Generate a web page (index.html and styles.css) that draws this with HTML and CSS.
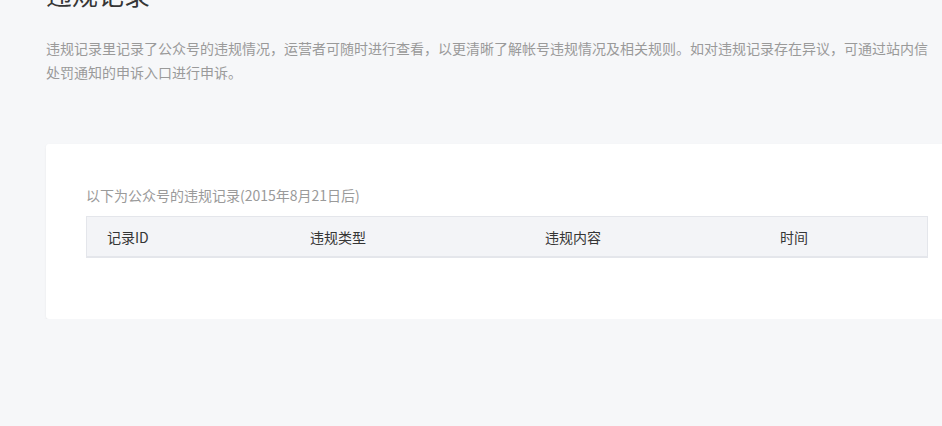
FILE: index.html
```html
<!DOCTYPE html>
<html lang="zh-CN">
<head>
    <meta charset="UTF-8">
    <title>违规记录</title>
    <link rel="stylesheet" href="styles.css">
</head>
<body>
    <div class="page">
        <h2 class="page-title">违规记录</h2>
        <p class="page-desc">违规记录里记录了公众号的违规情况，运营者可随时进行查看，以更清晰了解帐号违规情况及相关规则。如对违规记录存在异议，可通过站内信处罚通知的申诉入口进行申诉。</p>

        <div class="card">
            <p class="card-tips">以下为公众号的违规记录(2015年8月21日后)</p>
            <table class="record-table">
                <thead>
                    <tr>
                        <th class="col-id">记录ID</th>
                        <th class="col-type">违规类型</th>
                        <th class="col-content">违规内容</th>
                        <th class="col-time">时间</th>
                    </tr>
                </thead>
                <tbody></tbody>
            </table>
        </div>
    </div>
</body>
</html>
```

FILE: styles.css
```css
html,
body {
    margin: 0;
    padding: 0;
    background-color: #f6f7f9;
    overflow: hidden;
}

body {
    font-family: "Noto Sans CJK SC", "Liberation Sans", sans-serif;
    color: #353535;
    font-size: 14px;
}

.page {
    width: 922px;
    margin-left: 46px;
}

/* the page is scrolled a bit, so the title is cut at the top */
.page-title {
    margin: -24px 0 0 0;
    font-size: 26px;
    line-height: 36px;
    font-weight: 400;
    color: #353535;
}

.page-desc {
    margin: 24px 0 0 0;
    max-width: 890px;
    line-height: 24px;
    color: #9a9a9a;
}

.card {
    margin-top: 60px;
    background-color: #fff;
    border-radius: 3px;
    box-shadow: 0 1px 2px rgba(150, 150, 150, .15);
    padding: 40px 40px 60px;
    height: 75px;
}

.card-tips {
    margin: 0 0 10px 0;
    line-height: 22px;
    color: #9a9a9a;
}

.record-table {
    width: 842px;
    border-collapse: collapse;
    table-layout: fixed;
}

.record-table th {
    height: 39px;
    padding: 0 0 0 20px;
    text-align: left;
    font-weight: 400;
    background-color: #f3f4f7;
    border-top: 1px solid #e4e6eb;
    border-bottom: 2px solid #e4e6eb;
}

.record-table th:first-child {
    border-left: 1px solid #e4e6eb;
}

.record-table th:last-child {
    border-right: 1px solid #e4e6eb;
}

.col-id {
    width: 183px;
}

.col-type,
.col-content {
    width: 215px;
}
```
